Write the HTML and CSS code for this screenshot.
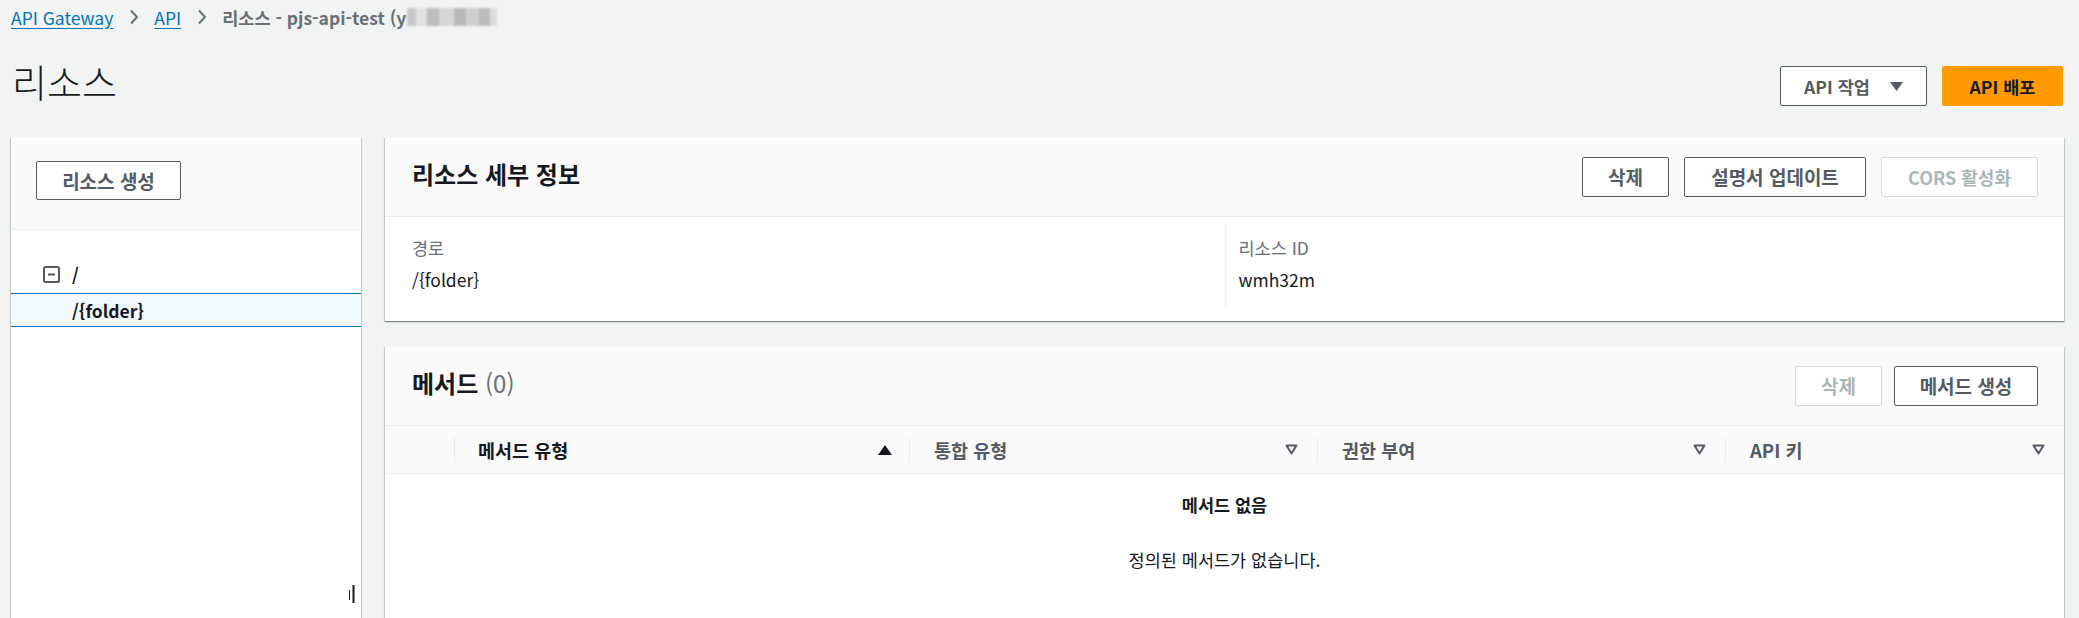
FILE: index.html
```html
<!DOCTYPE html>
<html lang="ko">
<head>
<meta charset="utf-8">
<title>리소스 - API Gateway</title>
<link rel="stylesheet" href="styles.css">
</head>
<body>
<div class="page">
  <nav class="crumbs">
    <a class="crumb-link" href="#">API Gateway</a>
    <svg class="chev" width="10" height="16" viewBox="0 0 10 16"><polyline points="2,1.5 8,8 2,14.5" fill="none" stroke="#687078" stroke-width="2"/></svg>
    <a class="crumb-link" href="#">API</a>
    <svg class="chev" width="10" height="16" viewBox="0 0 10 16"><polyline points="2,1.5 8,8 2,14.5" fill="none" stroke="#687078" stroke-width="2"/></svg>
    <span class="crumb-current">리소스 - pjs-api-test (y<span class="redacted"></span></span>
  </nav>

  <header class="page-header">
    <h1 class="page-title">리소스</h1>
    <div class="actions">
      <button class="btn btn-api">API 작업
        <svg class="caret" width="13" height="9" viewBox="0 0 13 9"><path d="M0 0H13L6.5 9Z" fill="#545b64"/></svg>
      </button>
      <button class="btn btn-primary">API 배포</button>
    </div>
  </header>

  <main class="layout">
    <aside class="tree-panel">
      <div class="tree-head">
        <button class="btn btn-create">리소스 생성</button>
      </div>
      <ul class="tree">
        <li class="tree-row tree-root">
          <svg class="minus" width="17" height="17" viewBox="0 0 17 17"><rect x="1" y="1" width="15" height="15" rx="1.5" fill="none" stroke="#545b64" stroke-width="2"/><line x1="5" y1="8.5" x2="12" y2="8.5" stroke="#545b64" stroke-width="2"/></svg>
          <span class="tree-label">/</span>
        </li>
        <li class="tree-row tree-selected"><span class="tree-label">/{folder}</span></li>
      </ul>
      <svg class="resize-handle" width="10" height="20" viewBox="0 0 10 20"><line x1="1.5" y1="5" x2="1.5" y2="15" stroke="#16191f" stroke-width="1"/><line x1="5.5" y1="0" x2="5.5" y2="18" stroke="#16191f" stroke-width="2"/></svg>
    </aside>

    <section class="content">
      <div class="panel">
        <div class="panel-head">
          <h2 class="panel-title">리소스 세부 정보</h2>
          <div class="panel-actions">
            <button class="btn btn-del">삭제</button>
            <button class="btn btn-doc">설명서 업데이트</button>
            <button class="btn btn-cors" disabled>CORS 활성화</button>
          </div>
        </div>
        <div class="details">
          <div class="detail-col">
            <div class="detail-label">경로</div>
            <div class="detail-value">/{folder}</div>
          </div>
          <div class="detail-col detail-col-right">
            <div class="detail-label">리소스 ID</div>
            <div class="detail-value">wmh32m</div>
          </div>
        </div>
      </div>

      <div class="panel panel-methods">
        <div class="panel-head">
          <h2 class="panel-title">메서드 <span class="count">(0)</span></h2>
          <div class="panel-actions actions-tight">
            <button class="btn btn-del" disabled>삭제</button>
            <button class="btn btn-method">메서드 생성</button>
          </div>
        </div>
        <div class="table-head">
          <div class="th th-select"></div>
          <div class="th th-sorted"><span>메서드 유형</span>
            <svg width="14" height="10" viewBox="0 0 14 10"><path d="M7 0L14 10H0Z" fill="#16191f"/></svg>
          </div>
          <div class="th"><span>통합 유형</span>
            <svg width="13" height="11" viewBox="0 0 13 11"><path d="M1.5 1.5H11.5L6.5 9.5Z" fill="none" stroke="#545b64" stroke-width="2" stroke-linejoin="round"/></svg>
          </div>
          <div class="th"><span>권한 부여</span>
            <svg width="13" height="11" viewBox="0 0 13 11"><path d="M1.5 1.5H11.5L6.5 9.5Z" fill="none" stroke="#545b64" stroke-width="2" stroke-linejoin="round"/></svg>
          </div>
          <div class="th"><span>API 키</span>
            <svg width="13" height="11" viewBox="0 0 13 11"><path d="M1.5 1.5H11.5L6.5 9.5Z" fill="none" stroke="#545b64" stroke-width="2" stroke-linejoin="round"/></svg>
          </div>
        </div>
        <div class="empty">
          <div class="empty-title">메서드 없음</div>
          <div class="empty-text">정의된 메서드가 없습니다.</div>
        </div>
      </div>
    </section>
  </main>
</div>
</body>
</html>
```

FILE: styles.css
```css
* { box-sizing: border-box; }

html, body {
  margin: 0;
  padding: 0;
  background: #f2f3f3;
  overflow: hidden;
}

body {
  font-family: "Noto Sans CJK KR", "Noto Sans", sans-serif;
  font-size: 17.5px;
  color: #16191f;
}

.page {
  padding: 0 15px 0 11px;
}

/* breadcrumbs */
.crumbs {
  height: 34px;
  display: flex;
  align-items: center;
  white-space: nowrap;
}

.crumb-link {
  color: #0073bb;
  text-decoration: underline;
  text-underline-offset: 3px;
}

.chev {
  margin: 0 15px 0 16px;
  flex: none;
}

.crumb-current {
  color: #687078;
  font-weight: 700;
  display: flex;
  align-items: center;
}

.redacted {
  display: inline-block;
  width: 90px;
  height: 18px;
  margin-left: 1px;
  background: linear-gradient(90deg, #c9c9c9 0 10%, #e2e2e2 10% 22%, #bdbdbd 22% 36%, #d7d7d7 36% 52%, #b9b9b9 52% 66%, #cfcfcf 66% 80%, #bcbcbc 80% 92%, #dcdcdc 92%);
  filter: blur(1px);
}

/* page header */
.page-header {
  height: 103px;
  display: flex;
  justify-content: space-between;
  align-items: flex-start;
}

.page-title {
  margin: 24px 0 0 1px;
  font-size: 38px;
  line-height: 46px;
  font-weight: 300;
  color: #16191f;
}

.actions {
  margin-top: 32px;
  display: flex;
  gap: 15px;
  padding-right: 1px;
}

/* buttons */
.btn {
  height: 40px;
  border: 1px solid #545b64;
  border-radius: 2px;
  background: #fff;
  color: #545b64;
  font-family: inherit;
  font-size: 19px;
  font-weight: 700;
  display: inline-flex;
  align-items: center;
  justify-content: center;
  padding: 0;
  cursor: pointer;
}

.btn:disabled {
  border-color: #d5dbdb;
  color: #aab7b8;
  cursor: default;
}

.btn-api { width: 147px; gap: 20px; font-size: 17.5px; }
.btn-primary {
  width: 121px;
  font-size: 17.5px;
  background: #ff9900;
  border-color: #ff9900;
  color: #16191f;
}
.btn-create { width: 145px; height: 39px; }
.btn-del { width: 87px; }
.btn-doc { width: 182px; }
.btn-cors { width: 157px; font-size: 18px; }
.btn-method { width: 144px; }

.caret { flex: none; }

/* layout */
.layout {
  display: flex;
  gap: 24px;
  height: 520px;
}

.panel,
.tree-panel {
  background: #fff;
  box-shadow: 0 1px 1px 0 rgba(0, 28, 36, 0.3), 1px 1px 1px 0 rgba(0, 28, 36, 0.15), -1px 1px 1px 0 rgba(0, 28, 36, 0.15);
}

/* tree */
.tree-panel {
  width: 350px;
  flex: none;
  position: relative;
}

.tree-head {
  height: 93px;
  padding: 24px 25px 0;
  background: #fafafa;
  border-bottom: 1px solid #eaeded;
}

.tree {
  list-style: none;
  margin: 0;
  padding: 25px 0 0;
}

.tree-row {
  display: flex;
  align-items: center;
}

.tree-root {
  height: 38px;
  padding-left: 32px;
  gap: 12px;
}

.tree-label {
  font-weight: 700;
  color: #16191f;
}

.tree-selected {
  height: 34px;
  padding-left: 61px;
  background: #f1faff;
  border-top: 1px solid #0073bb;
  border-bottom: 1px solid #0073bb;
}

.resize-handle {
  position: absolute;
  left: 337px;
  top: 448px;
}

/* content column */
.content {
  flex: 1;
  display: flex;
  flex-direction: column;
  gap: 25px;
}

.panel-head {
  height: 80px;
  display: flex;
  justify-content: space-between;
  align-items: center;
  padding: 0 26px 0 27px;
  background: #fafafa;
  border-bottom: 1px solid #eaeded;
}

.panel-title {
  margin: 0 0 6px;
  font-size: 24px;
  font-weight: 700;
  color: #16191f;
}

.count {
  font-weight: 400;
  color: #687078;
}

.panel-actions {
  display: flex;
  gap: 15px;
}

.actions-tight { gap: 12px; }

/* details */
.details {
  display: grid;
  grid-template-columns: 1fr 1fr;
  padding: 8px 0 14px;
}

.detail-col {
  padding: 8px 27px 12px;
}

.detail-col-right {
  border-left: 1px solid #eaeded;
  padding-left: 13px;
}

.detail-label {
  line-height: 30px;
  color: #687078;
}

.detail-value {
  margin-top: 2px;
  line-height: 30px;
  color: #16191f;
}

/* methods */
.panel-methods {
  flex: 1;
}

.table-head {
  display: grid;
  grid-template-columns: 69px 455px 408px 408px 1fr;
  height: 48px;
  background: #fafafa;
  border-bottom: 1px solid #eaeded;
}

.th {
  position: relative;
  display: flex;
  align-items: center;
  justify-content: space-between;
  padding: 0 19px 0 25px;
  font-size: 18.5px;
  font-weight: 700;
  color: #545b64;
}

.th::before {
  content: "";
  position: absolute;
  left: 0;
  top: 11px;
  bottom: 11px;
  width: 1px;
  background: #e9ebed;
}

.th-select::before { display: none; }

.th-sorted {
  color: #16191f;
  padding-left: 24px;
  padding-right: 17px;
}

.empty {
  text-align: center;
  padding-top: 18px;
}

.empty-title {
  font-weight: 700;
  line-height: 26px;
}

.empty-text {
  margin-top: 29px;
  line-height: 26px;
}
```
